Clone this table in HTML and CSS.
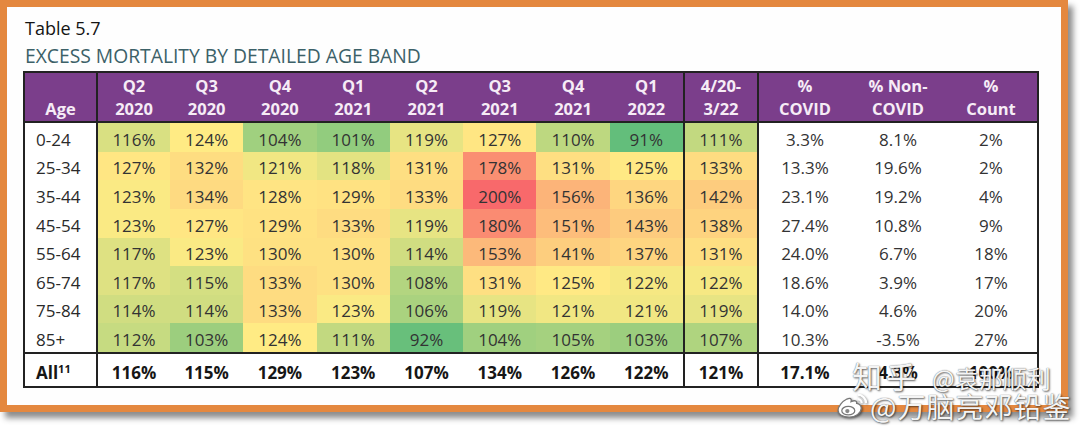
FILE: index.html
```html
<!DOCTYPE html>
<html lang="en">
<head>
<meta charset="utf-8">
<title>Table 5.7</title>
<link rel="stylesheet" href="styles.css">
</head>
<body>
<div class="frame">
  <div class="caption">Table 5.7</div>
  <div class="heading">EXCESS MORTALITY BY DETAILED AGE BAND</div>
  <table class="mort">
    <colgroup>
      <col class="c-age"><col class="c-first"><col class="c-q" span="7"><col class="c-tot"><col class="c-pct"><col class="c-pct"><col class="c-cnt">
    </colgroup>
    <thead>
      <tr>
        <th>Age</th>
        <th class="sep">Q2<br>2020</th><th>Q3<br>2020</th><th>Q4<br>2020</th><th>Q1<br>2021</th><th>Q2<br>2021</th><th>Q3<br>2021</th><th>Q4<br>2021</th><th>Q1<br>2022</th>
        <th class="sep">4/20-<br>3/22</th>
        <th class="sep">%<br>COVID</th><th>% Non-<br>COVID</th><th>%<br>Count</th>
      </tr>
    </thead>
    <tbody>
      <tr><td class="age">0-24</td><td class="h sep">116%</td><td class="h">124%</td><td class="h">104%</td><td class="h">101%</td><td class="h">119%</td><td class="h">127%</td><td class="h">110%</td><td class="h">91%</td><td class="h sep">111%</td><td class="sep">3.3%</td><td>8.1%</td><td>2%</td></tr>
      <tr><td class="age">25-34</td><td class="h sep">127%</td><td class="h">132%</td><td class="h">121%</td><td class="h">118%</td><td class="h">131%</td><td class="h">178%</td><td class="h">131%</td><td class="h">125%</td><td class="h sep">133%</td><td class="sep">13.3%</td><td>19.6%</td><td>2%</td></tr>
      <tr><td class="age">35-44</td><td class="h sep">123%</td><td class="h">134%</td><td class="h">128%</td><td class="h">129%</td><td class="h">133%</td><td class="h">200%</td><td class="h">156%</td><td class="h">136%</td><td class="h sep">142%</td><td class="sep">23.1%</td><td>19.2%</td><td>4%</td></tr>
      <tr><td class="age">45-54</td><td class="h sep">123%</td><td class="h">127%</td><td class="h">129%</td><td class="h">133%</td><td class="h">119%</td><td class="h">180%</td><td class="h">151%</td><td class="h">143%</td><td class="h sep">138%</td><td class="sep">27.4%</td><td>10.8%</td><td>9%</td></tr>
      <tr><td class="age">55-64</td><td class="h sep">117%</td><td class="h">123%</td><td class="h">130%</td><td class="h">130%</td><td class="h">114%</td><td class="h">153%</td><td class="h">141%</td><td class="h">137%</td><td class="h sep">131%</td><td class="sep">24.0%</td><td>6.7%</td><td>18%</td></tr>
      <tr><td class="age">65-74</td><td class="h sep">117%</td><td class="h">115%</td><td class="h">133%</td><td class="h">130%</td><td class="h">108%</td><td class="h">131%</td><td class="h">125%</td><td class="h">122%</td><td class="h sep">122%</td><td class="sep">18.6%</td><td>3.9%</td><td>17%</td></tr>
      <tr><td class="age">75-84</td><td class="h sep">114%</td><td class="h">114%</td><td class="h">133%</td><td class="h">123%</td><td class="h">106%</td><td class="h">119%</td><td class="h">121%</td><td class="h">121%</td><td class="h sep">119%</td><td class="sep">14.0%</td><td>4.6%</td><td>20%</td></tr>
      <tr><td class="age">85+</td><td class="h sep">112%</td><td class="h">103%</td><td class="h">124%</td><td class="h">111%</td><td class="h">92%</td><td class="h">104%</td><td class="h">105%</td><td class="h">103%</td><td class="h sep">107%</td><td class="sep">10.3%</td><td>-3.5%</td><td>27%</td></tr>
      <tr class="all"><td class="age">All<sup>11</sup></td><td class="sep">116%</td><td>115%</td><td>129%</td><td>123%</td><td>107%</td><td>134%</td><td>126%</td><td>122%</td><td class="sep">121%</td><td class="sep">17.1%</td><td>4.3%</td><td>100%</td></tr>
    </tbody>
  </table>
  <div class="watermark">
    <div class="wm-line1"><span class="wm-zh">知乎</span><span class="wm-user">@袁那顺利</span></div>
    <div class="wm-line2">
      <svg class="wm-logo" viewBox="0 0 34 28" width="32" height="26">
        <path d="M14 26C7 26 2 23 2 18.5 2 14.5 6.5 9 11.5 6.5 15 5 17 5.8 16 9.2 19.5 7.8 22.5 8 22 11.2 25.5 12 27 14 27 16.5 27 21.5 21 26 14 26Z" fill="#fff" stroke="#777" stroke-width="1.4"/>
        <ellipse cx="13" cy="19" rx="7" ry="4.6" fill="#fff" stroke="#777" stroke-width="1.3"/>
        <circle cx="12" cy="19.5" r="2.3" fill="#888"/>
        <path d="M23 6.5a4.5 4.5 0 0 1 4.5 4.5" fill="none" stroke="#fff" stroke-width="2.4"/>
        <path d="M23 1.8a9.2 9.2 0 0 1 9.2 9.2" fill="none" stroke="#fff" stroke-width="2.4"/>
      </svg><span class="wm-name">@万脑亮邓铅鉴</span>
    </div>
  </div>
</div>
<script src="script.js"></script>
</body>
</html>
```

FILE: styles.css
```css
* { box-sizing: border-box; }
html, body { margin: 0; padding: 0; background: #ffffff; }
body {
  width: 1080px;
  height: 431px;
  overflow: hidden;
  font-family: "Open Sans", "Noto Sans", sans-serif;
}
.frame {
  position: relative;
  width: 1068px;
  height: 412px;
  border: 7px solid #e4883f;
  background: #fefefe;
  padding: 8px 0 0 16px;
  box-shadow: 5px 6px 6px rgba(0, 0, 0, 0.45);
}
.caption {
  font-size: 18px;
  line-height: 26px;
  color: #141414;
  padding-left: 2px;
}
.heading {
  font-size: 19.3px;
  line-height: 30px;
  color: #3c6168;
  padding-left: 2px;
}
.mort {
  width: 1016px;
  table-layout: fixed;
  border-collapse: separate;
  border-spacing: 0;
  border: 2px solid #222;
  font-size: 17px;
  color: #333;
}
.mort col.c-age { width: 71px; }
.mort col.c-first { width: 74px; }
.mort col.c-q { width: 73.2857px; }
.mort col.c-tot { width: 74px; }
.mort col.c-pct { width: 94px; }
.mort col.c-cnt { width: 92px; }
.mort th {
  height: 50px;
  padding: 0 0 1px;
  background: #7b3e8b;
  color: #f6ecf6;
  font-size: 16.5px;
  font-weight: 700;
  line-height: 23px;
  text-align: center;
  vertical-align: bottom;
  border-bottom: 2px solid #222;
  white-space: nowrap;
}
.mort td {
  height: 28.625px;
  padding: 0;
  line-height: 24px;
  text-align: center;
  vertical-align: bottom;
  background: #fff;
  white-space: nowrap;
}
.mort .sep { border-left: 2px solid #222; }
.mort td.age {
  text-align: left;
  padding-left: 11px;
  color: #2a2a2a;
}
.mort tr.all td {
  height: 34px;
  border-top: 2px solid #222;
  font-weight: 700;
  color: #161616;
  padding-bottom: 1px;
}
.mort sup {
  font-size: 11px;
  line-height: 0;
  vertical-align: 6px;
}
.watermark {
  position: absolute;
  left: 829px;
  top: 352px;
  font-family: "Noto Sans CJK SC", "Noto Sans", sans-serif;
  color: rgba(255, 255, 255, 0.95);
  text-shadow: 0 0 1px #555, 1px 1px 2px rgba(0, 0, 0, 0.6);
  white-space: nowrap;
}
.wm-line1 {
  display: flex;
  align-items: baseline;
  padding-left: 16px;
  height: 32px;
}
.wm-zh {
  font-size: 30px;
  line-height: 32px;
  letter-spacing: 4px;
  margin-right: 12px;
}
.wm-user {
  font-size: 24px;
  line-height: 32px;
}
.wm-line2 {
  display: flex;
  align-items: center;
  height: 30px;
}
.wm-logo {
  flex: none;
  margin-right: 2px;
  filter: drop-shadow(1px 1px 1px rgba(0, 0, 0, 0.5));
}
.wm-name {
  font-size: 28px;
  line-height: 30px;
  letter-spacing: 1px;
}
```

FILE: script.js
```js
(function () {
  var lo = 91, mid = 124, hi = 200;
  var G = [99, 190, 123], Y = [255, 235, 132], R = [248, 105, 107];
  function mix(a, b, t) {
    t = Math.max(0, Math.min(1, t));
    return a.map(function (x, i) { return Math.round(x + (b[i] - x) * t); });
  }
  document.querySelectorAll('td.h').forEach(function (td) {
    var v = parseFloat(td.textContent);
    var c = v <= mid ? mix(G, Y, (v - lo) / (mid - lo)) : mix(Y, R, (v - mid) / (hi - mid));
    td.style.backgroundColor = 'rgb(' + c.join(',') + ')';
  });
})();
```
